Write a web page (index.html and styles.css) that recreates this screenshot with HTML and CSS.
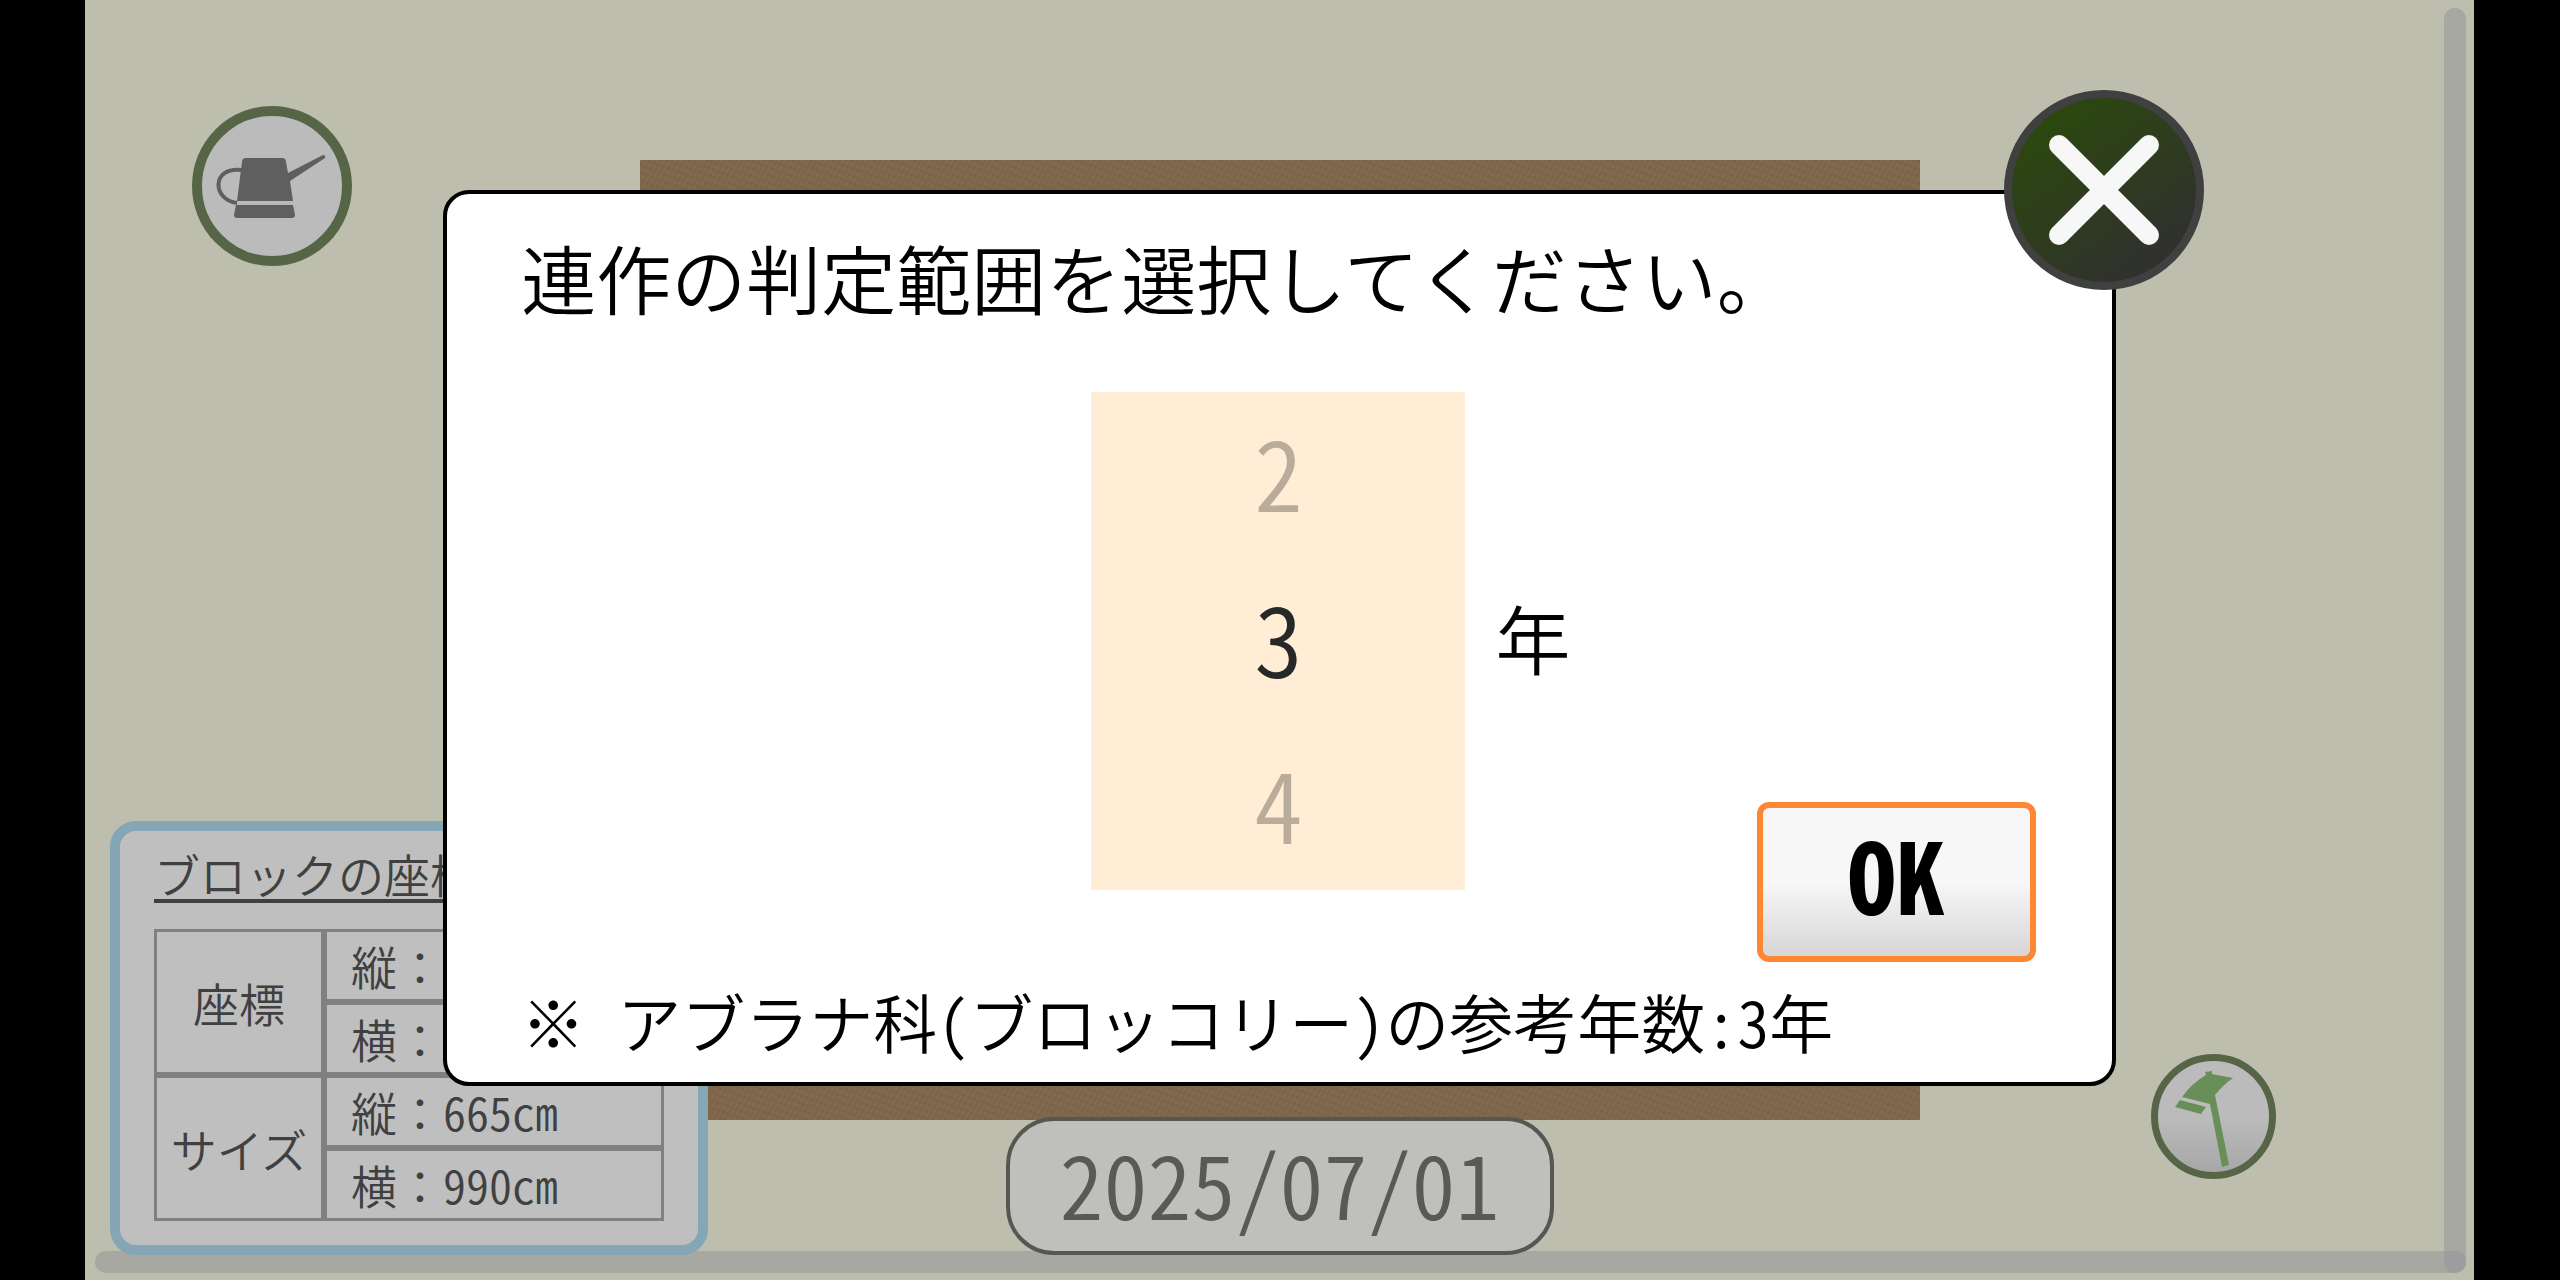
FILE: index.html
```
<!DOCTYPE html>
<html lang="ja">
<head>
    <meta charset="utf-8">
    <meta name="viewport" content="width=device-width, initial-scale=1">
    <title>連作の判定範囲</title>
    <link rel="stylesheet" href="styles.css">
</head>
<body>
    <div class="stage">
        <div class="field"></div>
        <div class="scrollbar scrollbar-x"></div>
        <div class="scrollbar scrollbar-y"></div>

        <div class="hud">
            <button class="round-button water-button" type="button" aria-label="水やり">
                <svg viewBox="0 0 160 160">
                    <circle cx="80" cy="80" r="75" fill="#bbbbbb" stroke="#576547" stroke-width="10"/>
                    <path d="M50 64C19 60 20 94 45 97" fill="none" stroke="#5f5f5f" stroke-width="4"/>
                    <path d="M54 52h36q4 0 4 4l2 11 35-18q3 0 2 3L98 75l3 20H45l5-39q0-4 4-4z" fill="#5f5f5f"/>
                    <path d="M45 97.500h56" stroke="#b8b8b8" stroke-width="3"/>
                    <path d="M44 99h57l2 10q0 3-3 3H45q-3 0-3-3z" fill="#5f5f5f"/>
                </svg>
            </button>

            <div class="hud-bottom">
                <div class="block-info">
                    <h2>ブロックの座標とサイズ</h2>
                    <table>
                        <tr>
                            <th rowspan="2" scope="rowgroup">座標</th>
                            <td>縦：<span class="value">1</span></td>
                        </tr>
                        <tr>
                            <td>横：<span class="value">1</span></td>
                        </tr>
                        <tr>
                            <th rowspan="2" scope="rowgroup">サイズ</th>
                            <td>縦：<span class="value">665cm</span></td>
                        </tr>
                        <tr>
                            <td>横：<span class="value">990cm</span></td>
                        </tr>
                    </table>
                </div>

                <button class="date" type="button">2025/07/01</button>

                <button class="round-button hoe-button" type="button" aria-label="耕す">
                    <svg viewBox="0 0 125 125">
                        <defs>
                            <linearGradient id="hoeShade" x1="0" y1="0" x2="0" y2="1">
                                <stop offset="0.5" stop-color="#bbbbbb"/>
                                <stop offset="1" stop-color="#a6a6a6"/>
                            </linearGradient>
                        </defs>
                        <circle cx="62.500" cy="62.500" r="59" fill="url(#hoeShade)" stroke="#576547" stroke-width="7"/>
                        <path d="M54 18l7-1v3l21 4q-10 7-18 17l14 70-7 2-12-63-28-7q10-14 24-22z" fill="#698f59"/>
                        <path d="M29 46l26 7-5 7-26-7z" fill="#698f59"/>
                    </svg>
                </button>
            </div>
        </div>

        <div class="overlay">
            <div class="modal" role="dialog" aria-labelledby="modalTitle">
                <button class="round-button close-button" type="button" aria-label="閉じる">
                    <svg viewBox="0 0 200 200">
                        <defs>
                            <linearGradient id="closeShade" x1="0.2" y1="0.1" x2="0.8" y2="0.9">
                                <stop offset="0" stop-color="#2c480d"/>
                                <stop offset="1" stop-color="#303030"/>
                            </linearGradient>
                        </defs>
                        <circle cx="100" cy="100" r="96" fill="url(#closeShade)" stroke="#404040" stroke-width="8"/>
                        <path d="M55 55l90 90M145 55l-90 90" stroke="#f7f7f7" stroke-width="20" stroke-linecap="round"/>
                    </svg>
                </button>

                <h1 id="modalTitle">連作の判定範囲を選択してください。</h1>

                <div class="modal-body">
                    <div class="picker" role="radiogroup" aria-label="年数">
                        <label><input type="radio" name="years" value="2"><span>2</span></label>
                        <label><input type="radio" name="years" value="3" checked><span>3</span></label>
                        <label><input type="radio" name="years" value="4"><span>4</span></label>
                    </div>
                    <span class="unit">年</span>
                    <button class="ok-button" type="button">OK</button>
                </div>

                <p class="note">※ アブラナ科(ブロッコリー)の参考年数:3年</p>
            </div>
        </div>
    </div>
</body>
</html>
```

FILE: styles.css
```
* {
    box-sizing: border-box;
}

body {
    margin: 0;
    background: #000;
    color: #000;
    font-family: "Noto Sans CJK JP", sans-serif;
    font-weight: 350;
    /* half-width latin and digits, so they line up with the kana */
    font-feature-settings: "hwid";
}

button {
    font: inherit;
    font-feature-settings: inherit;
    color: inherit;
    padding: 0;
    cursor: pointer;
}

h1, h2, p {
    margin: 0;
    font-weight: inherit;
}

.stage {
    position: relative;
    display: flex;
    align-items: center;
    justify-content: center;
    min-height: 100vh;
    margin: 0 86px 0 85px;
    background: #bdbeae;
    overflow: hidden;
}

.field {
    width: 1280px;
    height: 75vh;
    background:
        repeating-linear-gradient(120deg, rgba(255, 220, 160, 0.03) 0 2px, transparent 2px 5px),
        repeating-linear-gradient(20deg, rgba(0, 0, 0, 0.04) 0 2px, transparent 2px 7px),
        #7e664b;
}

.scrollbar {
    position: absolute;
    border-radius: 11px;
    background: rgba(146, 146, 150, 0.5);
}

.scrollbar-x {
    left: 10px;
    right: 8px;
    bottom: 7px;
    height: 22px;
}

.scrollbar-y {
    top: 8px;
    bottom: 7px;
    right: 8px;
    width: 22px;
}

.round-button {
    border: none;
    border-radius: 50%;
    background: none;
}

.round-button svg {
    display: block;
    width: 100%;
}

/* Tools around the field */
.hud {
    position: absolute;
    inset: 0;
    display: flex;
    flex-direction: column;
    justify-content: space-between;
    align-items: flex-start;
}

.water-button {
    width: 160px;
    margin: 106px 0 0 107px;
}

.hud-bottom {
    display: grid;
    grid-template-columns: 1fr auto 1fr;
    align-items: end;
    width: 100%;
    padding-bottom: 25px;
}

.block-info {
    width: 598px;
    margin-left: 25px;
    padding: 24px 34px;
    border: 10px solid #84a6b5;
    border-radius: 26px;
    background: #bfbfbf;
    color: #404040;
    font-size: 46px;
}

.block-info h2 {
    margin-bottom: 26px;
    padding-bottom: 8px;
    border-bottom: 4px solid #404040;
    font-size: 46px;
    line-height: 36px;
    white-space: nowrap;
}

.block-info table {
    width: 100%;
    border-spacing: 0;
    border: none;
    font-feature-settings: normal;
    line-height: 67px;
}

.block-info th,
.block-info td {
    padding: 0;
    border: 3px solid #808080;
    font-weight: inherit;
}

.block-info th {
    width: 170px;
}

.block-info td {
    padding-left: 24px;
}

.value {
    font-feature-settings: "hwid";
}

.date {
    width: 548px;
    height: 138px;
    padding-bottom: 8px;
    border: 4px solid #565753;
    border-radius: 48px;
    background: #bfc0bb;
    color: #595959;
    font-size: 88px;
    line-height: 120px;
}

.hoe-button {
    width: 125px;
    justify-self: end;
    margin: 0 198px 76px 0;
}

/* Dialog */
.overlay {
    position: absolute;
    inset: 0;
    display: flex;
    align-items: center;
    justify-content: center;
    padding-bottom: 4px;
}

.modal {
    position: relative;
    width: 70%;
    padding: 33px 76px 12px 74px;
    border: 4px solid #000;
    border-radius: 26px;
    background: #fff;
}

.modal h1 {
    margin-bottom: 65px;
    font-size: 75px;
    line-height: 100px;
}

.modal-body {
    display: grid;
    grid-template-columns: 1fr auto 1fr;
    grid-template-rows: auto 72px;
    margin-bottom: 8px;
}

.picker {
    grid-column: 2;
    width: 374px;
    background: #ffeed5;
}

.picker label {
    display: block;
    padding-bottom: 12px;
    font-size: 98px;
    line-height: 154px;
    text-align: center;
    color: #b9ac9a;
    cursor: pointer;
}

.picker input {
    position: absolute;
    opacity: 0;
}

.picker input:checked + span {
    color: #262829;
}

.unit {
    grid-column: 3;
    grid-row: 1;
    align-self: center;
    margin-left: 30px;
    padding-bottom: 8px;
    font-size: 75px;
    line-height: 100px;
}

.ok-button {
    grid-column: 3;
    grid-row: 1 / 3;
    justify-self: end;
    align-self: end;
    width: 279px;
    height: 160px;
    padding-bottom: 20px;
    border: 6px solid #ff8633;
    border-radius: 12px;
    background: linear-gradient(#f7f7f7 50%, #d6d6d6);
    font-size: 98px;
    font-weight: bold;
    line-height: 120px;
}

.note {
    font-size: 64px;
    line-height: 100px;
}

.close-button {
    position: absolute;
    top: -104px;
    right: -92px;
    width: 200px;
}
```
